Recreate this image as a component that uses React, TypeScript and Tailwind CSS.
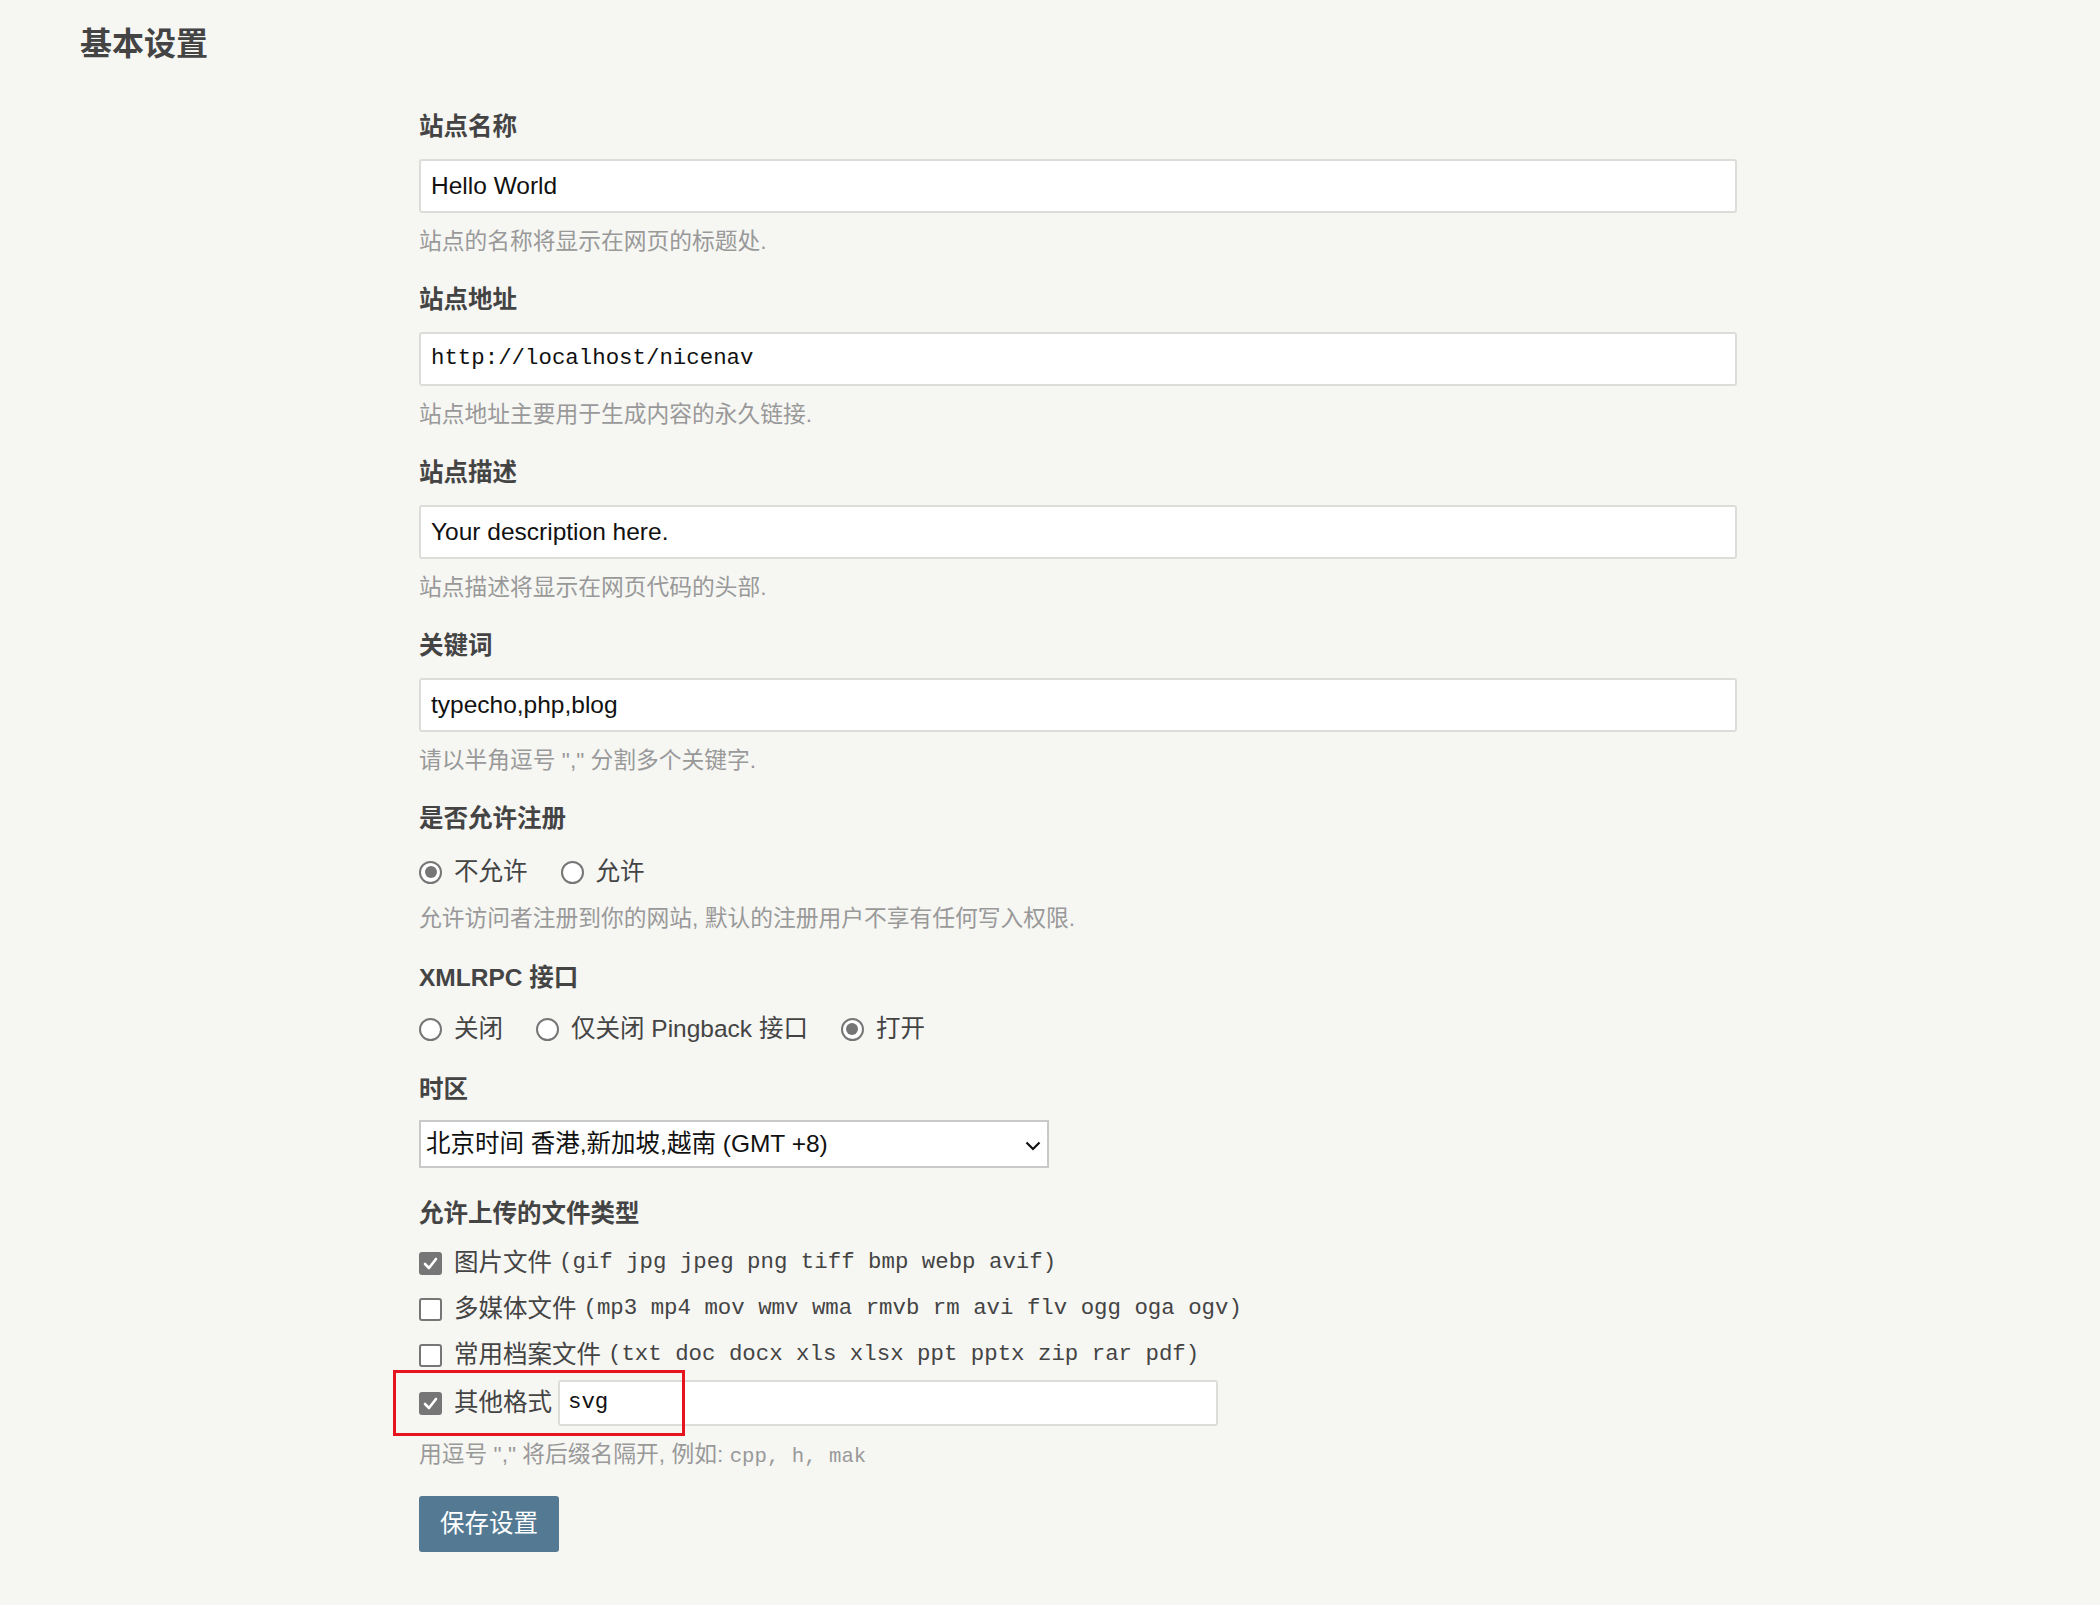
import React from "react";

const sans = "font-['Liberation_Sans','Noto_Sans_CJK_SC',sans-serif]";
const mono = "font-['Liberation_Mono','Noto_Sans_CJK_SC',monospace]";

function Label({ children }: { children: React.ReactNode }) {
  return (
    <div className="h-[34px] text-[24.5px] font-bold leading-[34px] text-[#444]">
      {children}
    </div>
  );
}

function Desc({ children, className = "" }: { children: React.ReactNode; className?: string }) {
  return (
    <div className={`h-[34px] text-[22.75px] leading-[34px] text-[#999] ${className}`}>
      {children}
    </div>
  );
}

function TextInput({ value, code = false }: { value: string; code?: boolean }) {
  return (
    <div
      className={`flex h-[54px] w-full items-center rounded-[3px] border-2 border-[#dcdcd9] bg-white pl-[10px] text-[#111] ${
        code ? `${mono} text-[22.4px]` : "text-[24.5px]"
      }`}
    >
      {value}
    </div>
  );
}

function Radio({ checked, label, last = false }: { checked?: boolean; label: string; last?: boolean }) {
  return (
    <label className={`flex items-center ${last ? "" : "mr-[33px]"}`}>
      <span className="mr-[12px] flex h-[23px] w-[23px] items-center justify-center rounded-full border-2 border-[#767676] bg-white">
        {checked && <span className="h-[12px] w-[12px] rounded-full bg-[#767676]" />}
      </span>
      <span className="text-[24.5px] text-[#444]">{label}</span>
    </label>
  );
}

function Checkbox({ checked }: { checked?: boolean }) {
  if (checked) {
    return (
      <span className="mr-[12px] flex h-[23px] w-[23px] shrink-0 items-center justify-center rounded-[3px] bg-[#767676]">
        <svg width="15" height="13" viewBox="0 0 15 13">
          <polyline points="2,7 6,11 13,2" fill="none" stroke="white" strokeWidth="2.6" strokeLinecap="round" strokeLinejoin="round" />
        </svg>
      </span>
    );
  }
  return <span className="mr-[12px] h-[23px] w-[23px] shrink-0 rounded-[3px] border-2 border-[#767676] bg-white" />;
}

function FileRow({ checked, name, types }: { checked?: boolean; name: string; types: string }) {
  return (
    <div className="flex h-[46px] items-center text-[#444]">
      <Checkbox checked={checked} />
      <span className="text-[24.5px]">{name}</span>
      <span className={`${mono} ml-[7px] text-[22.4px]`}>{types}</span>
    </div>
  );
}

export default function App() {
  return (
    <div className={`min-h-screen bg-[#f6f6f3] ${sans}`}>
      <div className="pl-[80px] pt-[22px]">
        <h2 className="h-[44px] text-[32px] font-bold leading-[44px] text-[#444]">基本设置</h2>
      </div>

      <form className="ml-[419px] mt-[44px] w-[1318px]">
        <div>
          <Label>站点名称</Label>
          <div className="mt-[15px]">
            <TextInput value="Hello World" />
          </div>
          <Desc className="mt-[11px]">站点的名称将显示在网页的标题处.</Desc>
        </div>

        <div className="mt-[25px]">
          <Label>站点地址</Label>
          <div className="mt-[15px]">
            <TextInput value="http://localhost/nicenav" code />
          </div>
          <Desc className="mt-[11px]">站点地址主要用于生成内容的永久链接.</Desc>
        </div>

        <div className="mt-[25px]">
          <Label>站点描述</Label>
          <div className="mt-[15px]">
            <TextInput value="Your description here." />
          </div>
          <Desc className="mt-[11px]">站点描述将显示在网页代码的头部.</Desc>
        </div>

        <div className="mt-[25px]">
          <Label>关键词</Label>
          <div className="mt-[15px]">
            <TextInput value="typecho,php,blog" />
          </div>
          <Desc className="mt-[11px]">请以半角逗号 "," 分割多个关键字.</Desc>
        </div>

        <div className="mt-[25px]">
          <Label>是否允许注册</Label>
          <div className="mt-[19px] flex h-[34px] items-center">
            <Radio checked label="不允许" />
            <Radio label="允许" last />
          </div>
          <Desc className="mt-[12px]">允许访问者注册到你的网站, 默认的注册用户不享有任何写入权限.</Desc>
        </div>

        <div className="mt-[26px]">
          <Label>XMLRPC 接口</Label>
          <div className="mt-[17px] flex h-[34px] items-center">
            <Radio label="关闭" />
            <Radio label="仅关闭 Pingback 接口" />
            <Radio checked label="打开" last />
          </div>
        </div>

        <div className="mt-[27px]">
          <Label>时区</Label>
          <div className="mt-[13px] flex h-[48px] w-[630px] items-center justify-between border-2 border-[#c9c9c9] bg-white pl-[5px] pr-[6px] text-[24.5px] text-[#111]">
            <span>北京时间 香港,新加坡,越南 (GMT +8)</span>
            <svg width="16" height="10" viewBox="0 0 16 10" className="mt-[3px]">
              <polyline points="1.5,1.5 8,8 14.5,1.5" fill="none" stroke="#111" strokeWidth="2.2" />
            </svg>
          </div>
        </div>

        <div className="mt-[29px]">
          <Label>允许上传的文件类型</Label>
          <div className="mt-[9px]">
            <FileRow checked name="图片文件" types="(gif jpg jpeg png tiff bmp webp avif)" />
            <FileRow name="多媒体文件" types="(mp3 mp4 mov wmv wma rmvb rm avi flv ogg oga ogv)" />
            <FileRow name="常用档案文件" types="(txt doc docx xls xlsx ppt pptx zip rar pdf)" />
            <div className="relative mt-[2px] flex h-[46px] items-center text-[#444]">
              <Checkbox checked />
              <span className="text-[24.5px]">其他格式</span>
              <div className={`ml-[6px] flex h-[46px] w-[660px] items-center rounded-[3px] border-2 border-[#dcdcd9] bg-white pl-[8px] ${mono} text-[22.4px] text-[#111]`}>
                svg
              </div>
              <div className="pointer-events-none absolute left-[-26px] top-[-10px] h-[66px] w-[292px] border-[3px] border-[#e6141e]" />
            </div>
          </div>
          <Desc className="mt-[11px]">
            用逗号 "," 将后缀名隔开, 例如: <span className={`${mono} text-[20.7px]`}>cpp, h, mak</span>
          </Desc>
        </div>

        <button
          type="button"
          className="mt-[25px] mb-[40px] flex h-[56px] w-[140px] items-center justify-center rounded-[3px] bg-[#547a93] text-[24.5px] text-white"
        >
          保存设置
        </button>
      </form>
    </div>
  );
}
